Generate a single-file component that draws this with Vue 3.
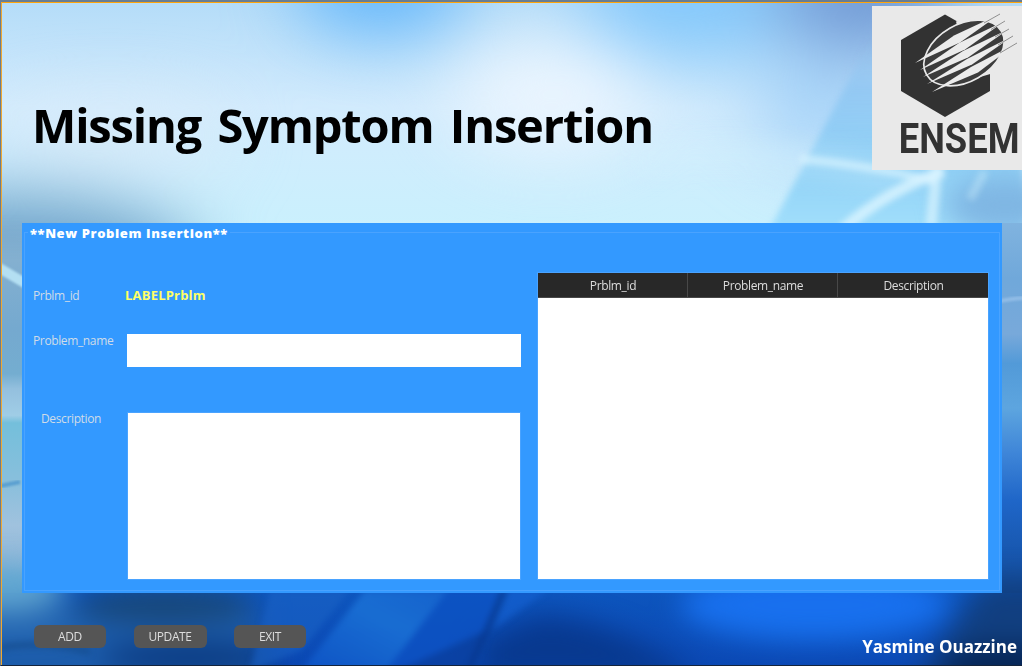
<script setup>
const columns = ['Prblm_id', 'Problem_name', 'Description']
const actions = ['ADD', 'UPDATE', 'EXIT']
</script>

<template>
  <main class="window">
    <svg class="backdrop" viewBox="0 0 1022 666" preserveAspectRatio="none" aria-hidden="true">
      <defs>
        <linearGradient id="sky" x1="0" y1="0" x2="0" y2="1">
          <stop offset="0" stop-color="#b4dcf8" />
          <stop offset=".16" stop-color="#d2ebfd" />
          <stop offset=".34" stop-color="#caf0fd" />
          <stop offset=".5" stop-color="#70a8d6" />
          <stop offset=".78" stop-color="#3a80c4" />
          <stop offset=".89" stop-color="#0d55bd" />
          <stop offset="1" stop-color="#0b48b4" />
        </linearGradient>
        <linearGradient id="leftEdge" x1="0" y1="0" x2="0" y2="1">
          <stop offset="0" stop-color="#8fb7d4" stop-opacity="0" />
          <stop offset=".12" stop-color="#84b0d0" />
          <stop offset=".3" stop-color="#75a9cf" />
          <stop offset=".42" stop-color="#74add0" />
          <stop offset=".46" stop-color="#94c0de" />
          <stop offset=".53" stop-color="#a0cde6" />
          <stop offset=".55" stop-color="#74bfdb" />
          <stop offset=".7" stop-color="#88bfdc" />
          <stop offset=".82" stop-color="#a0c2de" />
          <stop offset=".93" stop-color="#8db6d8" />
          <stop offset="1" stop-color="#5c9fcc" />
        </linearGradient>
        <linearGradient id="rightEdge" x1="0" y1="0" x2="0" y2="1">
          <stop offset="0" stop-color="#80b3df" />
          <stop offset=".15" stop-color="#70a8da" />
          <stop offset=".3" stop-color="#78a9da" />
          <stop offset=".38" stop-color="#529ad8" />
          <stop offset=".5" stop-color="#5da5df" />
          <stop offset=".62" stop-color="#3f86d8" />
          <stop offset=".75" stop-color="#1f66c8" />
          <stop offset="1" stop-color="#124c9c" />
        </linearGradient>
        <linearGradient id="wedge" x1="0" y1="0" x2="0" y2="1">
          <stop offset="0" stop-color="#8ec2ef" stop-opacity="0" />
          <stop offset=".25" stop-color="#8ec6f2" stop-opacity=".8" />
          <stop offset=".6" stop-color="#8fd0f6" />
          <stop offset="1" stop-color="#a4e1fc" />
        </linearGradient>
        <linearGradient id="ray" x1="0" y1="1" x2="1" y2="0">
          <stop offset="0" stop-color="#0e55c8" />
          <stop offset=".6" stop-color="#1c74d8" />
          <stop offset="1" stop-color="#1866d0" />
        </linearGradient>
        <filter id="b1" x="-30%" y="-30%" width="160%" height="160%" color-interpolation-filters="sRGB"><feGaussianBlur stdDeviation="1.200" /></filter>
        <filter id="b3" x="-30%" y="-30%" width="160%" height="160%" color-interpolation-filters="sRGB"><feGaussianBlur stdDeviation="3" /></filter>
        <filter id="b12" x="-50%" y="-50%" width="200%" height="200%" color-interpolation-filters="sRGB"><feGaussianBlur stdDeviation="14" /></filter>
        <filter id="b35" x="-50%" y="-50%" width="200%" height="200%" color-interpolation-filters="sRGB"><feGaussianBlur stdDeviation="35" /></filter>
      </defs>
      <rect width="1022" height="666" fill="url(#sky)" />
      <g filter="url(#b35)">
        <ellipse cx="380" cy="-15" rx="85" ry="48" fill="#62b6fb" />
        <ellipse cx="690" cy="-5" rx="110" ry="60" fill="#84c8fb" />
        <ellipse cx="865" cy="-5" rx="90" ry="58" fill="#7099d4" />
        <ellipse cx="820" cy="100" rx="70" ry="60" fill="#a8d4f8" />
        <ellipse cx="550" cy="95" rx="100" ry="55" fill="#ebf5fe" />
        <ellipse cx="0" cy="266" rx="200" ry="70" fill="#6a9ec6" />
        <ellipse cx="110" cy="135" rx="120" ry="30" fill="#d9ebf9" />
      </g>
      <path d="M870 40L764 240H1022V40Z" fill="url(#wedge)" filter="url(#b3)" />
      <g filter="url(#b12)">
        <ellipse cx="1005" cy="205" rx="60" ry="30" fill="#7fb6e3" />
        <path d="M640 160Q760 145 900 175" fill="none" stroke="#d7f2ff" stroke-width="12" opacity=".7" />
      </g>
      <g filter="url(#b3)" fill="none" stroke="#dcf5ff">
        <path d="M800 159Q860 164 935 181" stroke-width="8" opacity=".7" />
        <path d="M842 230Q887 190 944 171" stroke-width="11" opacity=".8" />
        <path d="M937 166L931 226" stroke-width="11" opacity=".7" />
        <path d="M985 171L970 199" stroke-width="8" opacity=".35" />
      </g>
      <rect y="215" width="24" height="378" fill="url(#leftEdge)" />
      <rect x="1000" y="223" width="22" height="370" fill="url(#rightEdge)" />
      <path d="M-4 266L28 285" stroke="#b4dff2" stroke-width="10" filter="url(#b1)" />
      <path d="M0 486L20 482" stroke="#5a9fd0" stroke-width="4" filter="url(#b1)" />
      <path d="M996 302Q1014 298 1026 298" stroke="#91bce6" stroke-width="4" fill="none" filter="url(#b1)" />
      <g filter="url(#b12)">
        <path d="M-30 602H260V700H-30Z" fill="#1c5cab" />
        <ellipse cx="5" cy="588" rx="60" ry="22" fill="#62a8d2" />
        <ellipse cx="20" cy="625" rx="60" ry="10" fill="#2d70b8" />
        <ellipse cx="165" cy="605" rx="90" ry="17" fill="#184675" />
        <ellipse cx="190" cy="658" rx="90" ry="16" fill="#0b3a80" />
        <path d="M540 615Q620 620 700 680H480V640Z" fill="#08398f" />
        <ellipse cx="815" cy="605" rx="135" ry="36" fill="#1870ee" />
        <path d="M900 700L985 580H1060V700Z" fill="#113f80" />
        <ellipse cx="1010" cy="668" rx="70" ry="22" fill="#062554" />
      </g>
      <g filter="url(#b3)">
        <path d="M365 590H448L385 672H300Z" fill="url(#ray)" opacity=".8" />
        <path d="M270 590H350L302 650L250 672Z" fill="#1a62c4" opacity=".6" />
        <path d="M448 590H500L485 632L395 672H385Z" fill="#0d52c4" opacity=".7" />
        <path d="M395 672L487 630L470 672Z" fill="#0a3e9c" opacity=".7" />
        <path d="M504 590L486 632L470 668" stroke="#073689" stroke-width="5" fill="none" opacity=".8" />
        <path d="M510 590H548L492 630Z" fill="#1663d4" opacity=".6" />
        <path d="M0 648Q40 640 90 652" stroke="#124784" stroke-width="5" fill="none" opacity=".7" />
      </g>
    </svg>

    <header class="header">
      <h1 class="title">Missing Symptom Insertion</h1>
      <svg class="logo" viewBox="0 0 150 164" role="img" aria-label="ENSEM">
        <rect width="150" height="164" fill="#e9e9e9" />
        <path d="M73 8.500L118 34V85L73 111L29 85V34Z" fill="#323232" />
        <path d="M84 15.500L125 5V66L98 74Z" fill="#e9e9e9" />
        <ellipse cx="92" cy="47" rx="43.300" ry="28.500" transform="rotate(-30 92 47)" fill="#3c3c3c" stroke="#e9e9e9" stroke-width="1.700" />
        <g fill="#ececec">
          <path d="M43 57L82 29.500L128 8L88 36.500Z" />
          <path d="M48 64L87 37L133 15L93 43.500Z" />
          <path d="M51 71L91 45L137 23L96 51.500Z" />
          <path d="M55 78L95 53L141 30L100 58.500Z" />
          <path d="M60 86L99 61L145 37L106 66.500Z" />
        </g>
        <path d="M112 17L128 8M119 23.500L133 15M123 31L137 23M126 39L141 30M128 47L145 37" fill="none" stroke="#777" stroke-width=".8" />
        <text transform="translate(26.800 147.300) scale(.845 1)" class="logo-text">ENSEM</text>
      </svg>
    </header>

    <section class="panel">
      <fieldset class="group">
        <legend class="legend">**New Problem Insertion**</legend>
        <div class="content">
          <form class="form" @submit.prevent>
            <span class="label">Prblm_id</span>
            <strong class="record">LABELPrblm</strong>
            <label class="label" for="name">Problem_name</label>
            <input id="name" class="field" type="text" />
            <label class="label label-inset" for="description">Description</label>
            <textarea id="description" class="field area"></textarea>
          </form>
          <div class="table">
            <div class="table-head">
              <span v-for="c in columns" :key="c" class="cell">{{ c }}</span>
            </div>
          </div>
        </div>
      </fieldset>
    </section>

    <footer class="footer">
      <div class="actions">
        <button v-for="a in actions" :key="a" class="button" type="button">{{ a }}</button>
      </div>
      <span class="author">Yasmine Ouazzine</span>
    </footer>
  </main>
</template>

<style>
body { margin: 0; overflow: hidden; }
</style>

<style scoped>
* { box-sizing: border-box; }
.window {
  position: relative;
  isolation: isolate;
  width: 1022px;
  height: 666px;
  overflow: hidden;
  display: flex;
  flex-direction: column;
  border-bottom: 1px solid #14243c;
  border-left: 1px solid #687d92;
  font: 12px/16px "Open Sans", "Noto Sans", sans-serif;
  letter-spacing: -.37px;
}
.window::before {
  content: "";
  flex: none;
  height: 2px;
  background: #687d92;
  border-bottom: 1px solid #ffa50a;
}
.window::after {
  content: "";
  position: absolute;
  inset: 2px auto 0 0;
  width: 1px;
  background: #f0a830;
}
.backdrop { position: absolute; z-index: -1; top: 0; left: -1px; width: 1022px; height: 666px; }
.header { flex: none; height: 220px; display: flex; justify-content: space-between; align-items: flex-start; padding: 3px 0 0 31px; }
.title { margin: 86px 0 0; font-size: 47px; line-height: 66px; font-weight: 700; color: #000; letter-spacing: -1.150px; word-spacing: 5.200px; white-space: nowrap; }
.logo { width: 150px; height: 164px; flex: none; }
.logo-text { font: 700 43px "Roboto", sans-serif; letter-spacing: 0; fill: #323232; }
.panel { flex: none; width: 980px; height: 370px; margin-left: 21px; padding: 0 2px 2px; background: #3399ff; }
.group { height: 368px; min-width: 0; margin: 0; padding: 0; border: 1px solid #4aa3ff; }
.legend { height: 19px; margin-left: 3px; padding: 0 2px; font-size: 13px; line-height: 21px; font-weight: 800; color: #fff; letter-spacing: .6px; white-space: nowrap; }
.content { display: flex; gap: 17px; padding: 31px 0 0 8px; }
.form {
  width: 488px;
  height: 306px;
  display: grid;
  grid-template-columns: 92px 396px;
  grid-template-rows: 61px 79px 166px;
}
.label { color: #d0dce8; }
.form > .label { margin-top: -1px; }
.form > .label:first-child { margin-top: 0; padding-top: 15px; }
.form > .label-inset { padding-left: 8px; margin-top: -2px; }
.record { padding-top: 14px; color: #ffff66; font-size: 13px; font-weight: 700; letter-spacing: .2px; }
.field { width: 394px; height: 33px; margin: 0 0 0 2px; border: 0; padding: 4px; background: #fff; outline: 0; }
.area { width: 392px; height: 166px; margin-left: 3px; resize: none; box-shadow: 0 0 0 1px #4aa3ff; }
.table { width: 450px; height: 306px; background: #fff; box-shadow: 0 0 0 1px #4aa3ff; }
.table-head { height: 25px; display: grid; grid-template-columns: repeat(3, 1fr); background: #282828; border-bottom: 1px solid #484848; }
.cell { padding-left: 1px; color: #ddd; line-height: 25px; text-align: center; border-right: 1px solid #484848; }
.cell:last-child { border-right: 0; }
.footer { flex: 1; display: flex; justify-content: space-between; align-items: flex-start; padding: 32px 5px 0 33px; }
.actions { display: grid; grid-template-columns: 72px 73px 72px; column-gap: 27.500px; }
.button { height: 23px; padding: 0; border: 0; border-radius: 6px; background: #555; color: #ddd; font: inherit; letter-spacing: -.4px; line-height: 23px; }
.author { margin-top: 10px; font-size: 17px; line-height: 24px; font-weight: 700; color: #fff; letter-spacing: 0; white-space: nowrap; }
</style>
